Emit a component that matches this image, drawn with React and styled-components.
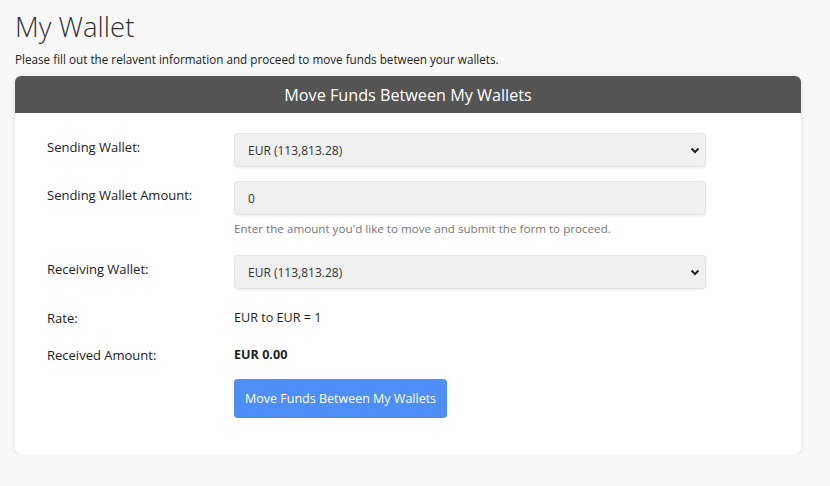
import React from 'react';
import styled, { createGlobalStyle } from 'styled-components';

const GlobalStyle = createGlobalStyle`
  body {
    margin: 0;
    background-color: #f8f8f8;
    font-family: 'Open Sans', 'Noto Sans', sans-serif;
    color: #222;
  }
`;

const Page = styled.div`
  padding: 10px 29px 0 15px;
`;

const Title = styled.h1`
  margin: 0;
  font-size: 27.5px;
  font-weight: 300;
  line-height: 34px;
  color: #333;
`;

const Intro = styled.p`
  margin: 7px 0 8px 0;
  font-size: 11.7px;
  line-height: 17px;
  color: #222;
`;

const Card = styled.div`
  background-color: white;
  border-radius: 6px;
  box-shadow: 0 2px 6px rgba(0, 0, 0, 0.1);
  overflow: hidden;
`;

const CardHeader = styled.div`
  height: 37px;
  background-color: #555555;
  color: white;
  display: flex;
  align-items: center;
  justify-content: center;
  font-size: 16.2px;
  font-weight: 500;
`;

const CardBody = styled.div`
  padding: 20px 95px 36px 32px;
`;

const Row = styled.div`
  display: grid;
  grid-template-columns: 187px 1fr;
  margin-bottom: ${(p) => p.gap || 0}px;
`;

const Label = styled.div`
  font-size: 13px;
  font-weight: ${(p) => (p.strong ? 500 : 400)};
  color: #222;
  padding-top: ${(p) => (p.top ? 4 : 0)}px;
  line-height: 20px;
`;

const Value = styled.div`
  font-size: 12.6px;
  line-height: 20px;
  font-weight: ${(p) => (p.bold ? 700 : 400)};
  color: #222;
`;

const SelectWrap = styled.div`
  position: relative;
`;

const Select = styled.select`
  appearance: none;
  width: 100%;
  height: 34px;
  padding: 0 30px 0 13px;
  background-color: #f0f0f0;
  border: 1px solid #e3e3e3;
  border-radius: 4px;
  box-shadow: 0 1px 3px rgba(0, 0, 0, 0.07);
  font-family: inherit;
  font-size: 12px;
  color: #333;
  outline: none;
`;

const Chevron = styled.svg`
  position: absolute;
  right: 6px;
  top: 14px;
  pointer-events: none;
`;

const Input = styled.input`
  box-sizing: border-box;
  width: 100%;
  height: 34px;
  padding: 0 13px;
  background-color: #f0f0f0;
  border: 1px solid #e3e3e3;
  border-radius: 4px;
  box-shadow: 0 1px 3px rgba(0, 0, 0, 0.07);
  font-family: inherit;
  font-size: 12px;
  color: #333;
  outline: none;
`;

const Help = styled.div`
  margin-top: 5px;
  font-size: 11.65px;
  line-height: 18px;
  color: #777;
`;

const Button = styled.button`
  height: 39px;
  padding: 0 11px;
  background-color: #4d8ef7;
  border: none;
  border-radius: 4px;
  color: white;
  font-family: inherit;
  font-size: 12.5px;
  font-weight: 500;
  cursor: pointer;
`;

function WalletSelect() {
  return (
    <SelectWrap>
      <Select defaultValue="eur">
        <option value="eur">EUR (113,813.28)</option>
      </Select>
      <Chevron width="10" height="7" viewBox="0 0 10 7">
        <path d="M1.5 1.5l3.5 3.5L8.5 1.5" fill="none" stroke="#222" strokeWidth="2" />
      </Chevron>
    </SelectWrap>
  );
}

function App() {
  return (
    <Page>
      <GlobalStyle />
      <Title>My Wallet</Title>
      <Intro>Please fill out the relavent information and proceed to move funds between your wallets.</Intro>
      <Card>
        <CardHeader>Move Funds Between My Wallets</CardHeader>
        <CardBody>
          <Row gap={14}>
            <Label strong top>Sending Wallet:</Label>
            <WalletSelect />
          </Row>
          <Row gap={17}>
            <Label strong top>Sending Wallet Amount:</Label>
            <div>
              <Input defaultValue="0" />
              <Help>Enter the amount you'd like to move and submit the form to proceed.</Help>
            </div>
          </Row>
          <Row gap={19}>
            <Label strong top>Receiving Wallet:</Label>
            <WalletSelect />
          </Row>
          <Row gap={17}>
            <Label>Rate:</Label>
            <Value>EUR to EUR = 1</Value>
          </Row>
          <Row gap={14}>
            <Label>Received Amount:</Label>
            <Value bold>EUR 0.00</Value>
          </Row>
          <Row>
            <div />
            <div>
              <Button>Move Funds Between My Wallets</Button>
            </div>
          </Row>
        </CardBody>
      </Card>
    </Page>
  );
}

export default App;
